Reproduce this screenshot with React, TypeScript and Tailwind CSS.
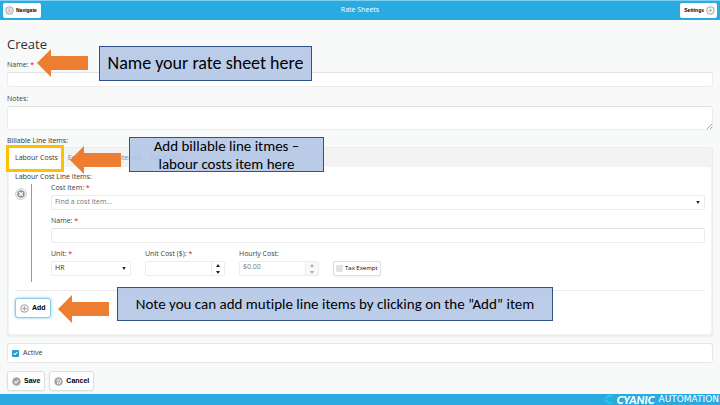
import React from 'react';
import { Check } from 'lucide-react';

const labelClass = "block text-[7px] leading-[8px] text-[#3c3c3c] mb-[3px]";
const inputClass = "block w-full h-[15px] bg-white border border-[#ececec] border-t-[#e2e2e2] rounded-[3px] px-[3px] text-[7px] text-[#444] outline-none";
const buttonClass = "flex items-center gap-[3px] h-5 px-1 bg-white border border-[#dedede] rounded-[3px] shadow-xs font-['Liberation_Sans',sans-serif] font-bold text-[7px] text-black";
const headerButtonClass = "flex items-center gap-[2px] h-[15px] bg-white rounded-[2px] font-['Liberation_Sans',sans-serif] font-bold text-[5px] text-black";

const Required = () => <span className="text-red-600"> *</span>;

const Field = ({ id, label, required = false, className = "", children }: {
  id: string;
  label: string;
  required?: boolean;
  className?: string;
  children: React.ReactNode;
}) => (
  <div className={className}>
    <label htmlFor={id} className={labelClass}>
      {label}
      {required && <Required />}
    </label>
    {children}
  </div>
);

const RoundIcon = ({ kind, size = 9 }: { kind: string; size?: number }) => (
  <svg width={size} height={size} viewBox="0 0 18 18" fill="none" className="shrink-0">
    {kind !== 'remove' && (
      <circle cx="9" cy="9" r="7.6" fill={kind === 'check' || kind === 'cancel' ? '#a3a3a3' : '#f2f2f2'} stroke="#a3a3a3" strokeWidth="2" />
    )}
    {kind === 'menu' && <path d="M5 6h8M5 9h8M5 12h8" stroke="#b5b5b5" strokeWidth="1.6" />}
    {kind === 'gear' && <circle cx="9" cy="9" r="2" fill="#8c8c8c" />}
    {kind === 'plus' && <path d="M9 4.5v9M4.5 9h9" stroke="#a3a3a3" strokeWidth="2" />}
    {kind === 'check' && <path d="M5 9l3 3 5-6" stroke="#fff" strokeWidth="2.2" />}
    {kind === 'cancel' && (
      <>
        <path d="M5 7a4.5 4.5 0 1 1 1 5.5" stroke="#fff" strokeWidth="1.6" />
        <path d="M6 12l4-4M6.5 8H10v3.5" stroke="#fff" strokeWidth="1.4" />
      </>
    )}
    {kind === 'remove' && (
      <>
        <circle cx="9" cy="9" r="8" fill="#fff" stroke="#c4c4c4" strokeWidth="1.4" />
        <circle cx="9" cy="9" r="5.6" fill="#8f8f8f" />
        <path d="M6.4 6.4l5.2 5.2M11.6 6.4l-5.2 5.2" stroke="#fff" strokeWidth="2.2" />
      </>
    )}
  </svg>
);

const Caret = () => (
  <svg viewBox="0 0 6 5" className="absolute right-[5px] top-[6px] w-1 h-[3px] pointer-events-none">
    <path d="M0 0h6L3 5z" fill="#222" />
  </svg>
);

const NumberBox = ({ id, value = "", disabled = false }: { id: string; value?: string; disabled?: boolean }) => (
  <div className="flex h-[15px] border border-[#ececec] rounded-[2px] bg-white">
    <input
      id={id}
      defaultValue={value}
      disabled={disabled}
      className="min-w-0 flex-1 px-[3px] text-[7px] text-[#777] bg-transparent outline-none [text-rendering:geometricPrecision]"
    />
    <div className={disabled ? "w-[13px] flex items-center justify-center border-l border-[#ececec] bg-[#f8f8f8]" : "w-[13px] flex items-center justify-center border-l border-[#ececec]"}>
      <svg width="4" height="10" viewBox="0 0 4 10" fill={disabled ? '#aaa' : '#222'}>
        <path d="M0 3L2 0l2 3zM0 7l2 3 2-3z" />
      </svg>
    </div>
  </div>
);

const Arrow = ({ className }: { className: string }) => (
  <svg width="51" height="28" viewBox="0 0 51 28" className={className}>
    <path d="M0 14L14 0v7h37v14H14v7z" fill="#ed7d31" />
  </svg>
);

const calloutClass = "absolute flex items-center justify-center text-center whitespace-nowrap border border-[#2f528f] bg-[#b4c7e7]/90 text-black font-[Carlito,Lato,sans-serif] [font-variant-ligatures:none]";

const tabs = ['Equipment', 'Materials', 'Fixed Price'];

const App = () => {
  return (
    <div className="relative min-h-screen flex flex-col bg-[#f8f9f9] font-['Open_Sans',sans-serif] text-[#333]">
      <header className="h-5 flex items-center justify-between bg-[#29abe2] border-t border-[#7fd0f2] px-[3px]">
        <div className="flex-1 flex">
          <button className={`${headerButtonClass} pl-[2px] pr-1`}>
            <RoundIcon kind="menu" />
            Navigate
          </button>
        </div>
        <span className="text-[7px] text-white">Rate Sheets</span>
        <div className="flex-1 flex justify-end">
          <button className={`${headerButtonClass} pl-1 pr-[2px]`}>
            Settings
            <RoundIcon kind="gear" />
          </button>
        </div>
      </header>

      <main className="px-[7px] pt-[14px] pb-[3px]">
        <h1 className="text-[13px] leading-5 mb-[7px]">Create</h1>
        <Field id="name" label="Name:" required className="mb-2">
          <input id="name" className={inputClass} />
        </Field>
        <Field id="notes" label="Notes:" className="mb-[7px]">
          <div className="relative">
            <textarea id="notes" className="block w-full h-6 bg-white border border-[#ececec] border-t-[#e2e2e2] rounded-[3px] px-[3px] text-[7px] outline-none resize-none" />
            <svg width="5" height="5" viewBox="0 0 5 5" className="absolute right-px bottom-px pointer-events-none">
              <path d="M0 5L5 0M3 5l2-2" stroke="#aaa" strokeWidth="1" />
            </svg>
          </div>
        </Field>

        <h2 className="text-[7px] leading-[8px] mb-[2px]">Billable Line Items:</h2>
        <section className="border border-[#ececec] rounded-[3px] bg-[#f3f3f3] shadow-xs mb-[7px] p-px pt-0">
          <nav className="flex h-[19px] text-[7px] text-[#2e95d3]">
            <button className="px-[6px] pt-[2px] bg-white text-[#333]">Labour Costs</button>
            {tabs.map((tab) => (
              <button key={tab} className="px-[4px] pt-[2px]">{tab}</button>
            ))}
          </nav>
          <div className="bg-white rounded-[3px] px-[6px] pt-[6px] pb-4">
            <h3 className="text-[7px] leading-[8px] mb-[3px]">Labour Cost Line Items:</h3>
            <div className="flex mb-2">
              <div className="w-[17px] shrink-0 flex items-start border-r border-[#999] pt-1 h-[98px]">
                <button aria-label="Remove line item"><RoundIcon kind="remove" size={12} /></button>
              </div>
              <div className="flex-1 pl-[19px]">
                <Field id="cost-item" label="Cost Item:" required className="mb-[7px]">
                  <div className="relative">
                    <select id="cost-item" className="block w-full h-[15px] appearance-none bg-white border border-[#ececec] rounded-[2px] px-[3px] text-[7px] text-[#777]">
                      <option>Find a cost item...</option>
                    </select>
                    <Caret />
                  </div>
                </Field>
                <Field id="item-name" label="Name:" required className="mb-[7px]">
                  <input id="item-name" className={inputClass} />
                </Field>
                <div className="flex items-end gap-[14px]">
                  <Field id="unit" label="Unit:" required className="w-20">
                    <div className="relative">
                      <select id="unit" className="block w-full h-[15px] appearance-none bg-white border border-[#ececec] rounded-[2px] px-[3px] text-[7px] text-[#333]">
                        <option>HR</option>
                      </select>
                      <Caret />
                    </div>
                  </Field>
                  <Field id="unit-cost" label="Unit Cost ($):" required className="w-20">
                    <NumberBox id="unit-cost" />
                  </Field>
                  <Field id="hourly-cost" label="Hourly Cost:" className="w-20">
                    <NumberBox id="hourly-cost" value="$0.00" disabled />
                  </Field>
                  <label className="flex items-center gap-[2px] h-[15px] px-[2px] bg-white border border-[#dedede] rounded-[2px] shadow-xs text-[6px] text-black whitespace-nowrap">
                    <input type="checkbox" className="appearance-none size-[7px] bg-[#e2e2e2] rounded-[1px]" />
                    Tax Exempt
                  </label>
                </div>
              </div>
            </div>
            <hr className="border-[#ebebeb] mb-[7px]" />
            <button className="flex items-center gap-[3px] h-5 w-9 px-1 bg-white border border-[#8ccbea] rounded-[3px] shadow-[0_0_3px_#7cc8ee] font-['Liberation_Sans',sans-serif] font-bold text-[7px] text-black">
              <RoundIcon kind="plus" />
              Add
            </button>
          </div>
        </section>

        <label className="flex items-center gap-1 h-5 px-1 bg-white border border-[#e6e6e6] rounded-[3px] text-[7px] mb-2">
          <span className="relative size-[7px]">
            <input type="checkbox" defaultChecked className="block appearance-none size-[7px] bg-[#1e9fd8] rounded-[1px]" />
            <Check className="absolute left-px top-px size-[5px] text-white pointer-events-none" strokeWidth={5} />
          </span>
          Active
        </label>

        <div className="flex gap-1">
          <button className={buttonClass}>
            <RoundIcon kind="check" />
            Save
          </button>
          <button className={buttonClass}>
            <RoundIcon kind="cancel" />
            Cancel
          </button>
        </div>
      </main>

      <footer className="mt-auto h-[11px] flex items-center justify-end gap-1 pr-px bg-[#29abe2] text-white leading-none">
        <svg width="8" height="9" viewBox="0 0 16 18" fill="none" stroke="#1de9fb" strokeWidth="2.4" strokeDasharray="4 2">
          <path d="M14 3L7 1 2 6v6l5 4 7-1" />
        </svg>
        <span className="font-[Lato,sans-serif] font-black italic text-[11px]">CYANIC</span>
        <span className="font-['DejaVu_Sans',sans-serif] text-[9px]">AUTOMATION</span>
      </footer>

      {/* Walkthrough notes over the form */}
      <Arrow className="absolute left-[37px] top-[49px]" />
      <div className={`${calloutClass} left-[99px] top-[46px] w-[213px] h-[35px] text-[18px]`}>
        Name your rate sheet here
      </div>
      <div className="absolute left-[6px] top-[145px] w-[58px] h-[27px] border-3 border-[#ffc000]" />
      <Arrow className="absolute left-[70px] top-[146px]" />
      <div className={`${calloutClass} left-[129px] top-[137px] w-[195px] h-[35px] text-[15px] leading-[18px]`}>
        Add billable line itmes –<br />labour costs item here
      </div>
      <Arrow className="absolute left-[58px] top-[295px]" />
      <div className={`${calloutClass} left-[117px] top-[287px] w-[436px] h-[34px] text-[15px]`}>
        Note you can add mutiple line items by clicking on the ”Add” item
      </div>
    </div>
  );
};

export default App;
